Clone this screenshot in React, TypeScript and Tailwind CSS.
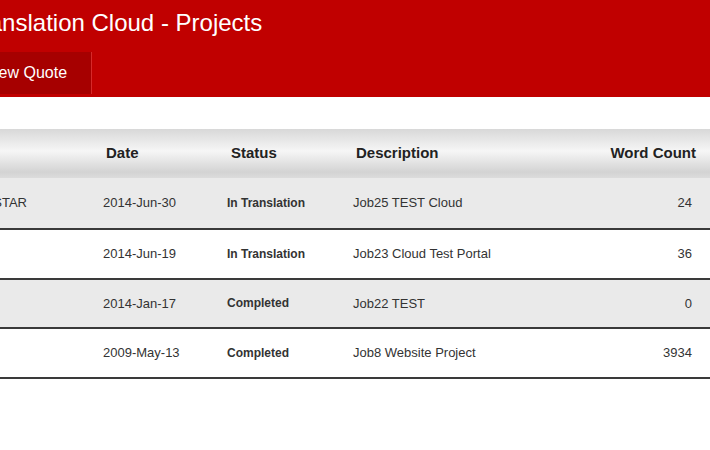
import React from 'react';

interface Project {
  name: string;
  date: string;
  status: string;
  description: string;
  words: number;
}

const projects: Project[] = [
  { name: 'Translation Cloud Test STAR', date: '2014-Jun-30', status: 'In Translation', description: 'Job25 TEST Cloud', words: 24 },
  { name: 'Cloud Test Portal', date: '2014-Jun-19', status: 'In Translation', description: 'Job23 Cloud Test Portal', words: 36 },
  { name: 'TEST', date: '2014-Jan-17', status: 'Completed', description: 'Job22 TEST', words: 0 },
  { name: 'Website Project', date: '2009-May-13', status: 'Completed', description: 'Job8 Website Project', words: 3934 },
];

const App: React.FC = () => {
  return (
    <div
      className="w-[710px] h-[450px] overflow-hidden bg-white"
      style={{ fontFamily: '"Liberation Sans", Arial, sans-serif' }}
    >
      <div className="h-[97px] bg-[#c00000] pt-[9px]">
        <h1 className="-ml-[33px] text-[24px] leading-[28px] font-normal text-white whitespace-nowrap">
          Translation Cloud - Projects
        </h1>
        <nav className="mt-[15px] flex">
          <button className="-ml-[37px] h-[42px] px-[24px] bg-[#a60000] border-r border-[#d62a2a] text-white text-[16px] flex items-center whitespace-nowrap">
            New Quote
          </button>
        </nav>
      </div>

      <div className="mt-[32px] -ml-[150px] w-[860px]">
        <table className="w-full table-fixed border-collapse">
          <colgroup>
            <col className="w-[243px]" />
            <col className="w-[124px]" />
            <col className="w-[126px]" />
            <col className="w-[217px]" />
            <col className="w-[150px]" />
          </colgroup>
          <thead>
            <tr className="h-[49px] bg-[linear-gradient(to_bottom,#d8d8d8_0%,#f6f6f6_45%,#d3d3d3_88%,#dcdcdc_100%)] text-[15px] font-bold text-[#222]">
              <th className="pl-[13px] text-left">Project</th>
              <th className="pl-[13px] text-left">Date</th>
              <th className="pl-[14px] text-left">Status</th>
              <th className="pl-[13px] text-left">Description</th>
              <th className="pr-[14px] text-right">Word Count</th>
            </tr>
          </thead>
          <tbody>
            {projects.map((p, i) => (
              <tr
                key={p.description}
                className={`${i === 0 ? 'h-[51px]' : 'h-[49.5px]'} ${
                  i % 2 === 0 ? 'bg-[#eaeaea]' : 'bg-white'
                } border-b-2 border-[#3a3a3a] text-[13px] text-[#333]`}
              >
                <td className="pl-[11px] whitespace-nowrap">{p.name}</td>
                <td className="pl-[10px] whitespace-nowrap">{p.date}</td>
                <td className="pl-[10px] text-[12px] font-bold whitespace-nowrap">{p.status}</td>
                <td className="pl-[10px] whitespace-nowrap">{p.description}</td>
                <td className="pr-[18px] text-right">{p.words}</td>
              </tr>
            ))}
          </tbody>
        </table>
      </div>
    </div>
  );
};

export default App;
